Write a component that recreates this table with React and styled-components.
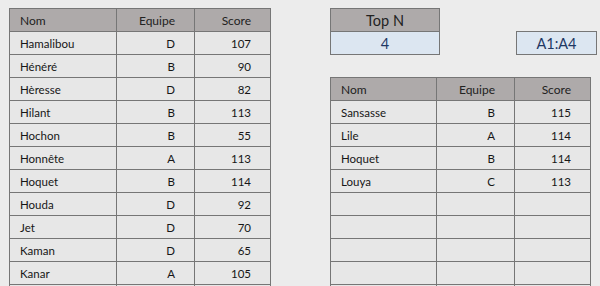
import React from "react";
import styled, { createGlobalStyle } from "styled-components";

const Global = createGlobalStyle`
  html, body {
    margin: 0;
    padding: 0;
    width: 600px;
    height: 286px;
    overflow: hidden;
    background: #ececec;
    font-family: Lato, "Liberation Sans", sans-serif;
  }
`;

const Page = styled.div`
  display: flex;
  align-items: flex-start;
  padding: 8px 0 0 9px;
`;

const Grid = styled.div`
  display: grid;
  grid-template-columns: ${(p) => p.$cols};
  grid-auto-rows: 22px;
  gap: 1px;
  background: #767676;
  border: 1px solid #767676;
  width: max-content;
`;

const Cell = styled.div`
  display: flex;
  align-items: center;
  justify-content: ${(p) => (p.$align === "left" ? "flex-start" : "flex-end")};
  padding: ${(p) => (p.$align === "left" ? "0 0 0 10px" : "0 19px 0 0")};
  background: ${(p) => (p.$head ? "#aeaaaa" : "#e7e7e7")};
  color: ${(p) => (p.$head ? "#222" : "#161616")};
  font-size: ${(p) => (p.$head ? "12px" : "11.5px")};
  white-space: nowrap;
`;

const RightCol = styled.div`
  display: flex;
  flex-direction: column;
  margin-left: 59px;
`;

const TopRow = styled.div`
  display: flex;
  align-items: flex-end;
  gap: 76px;
`;

const Box = styled.div`
  display: grid;
  grid-auto-rows: 22px;
  gap: 1px;
  background: #767676;
  border: 1px solid #767676;
  width: ${(p) => p.$w}px;
`;

const BoxCell = styled.div`
  display: flex;
  align-items: center;
  justify-content: center;
  font-size: 14.5px;
  background: ${(p) => (p.$head ? "#aeaaaa" : "#dce6f1")};
  color: ${(p) => (p.$head ? "#222" : "#1f3864")};
`;

const ResultWrap = styled.div`
  margin-top: 22px;
`;

const source = [
  ["Hamalibou", "D", "107"],
  ["Hénéré", "B", "90"],
  ["Hèresse", "D", "82"],
  ["Hilant", "B", "113"],
  ["Hochon", "B", "55"],
  ["Honnête", "A", "113"],
  ["Hoquet", "B", "114"],
  ["Houda", "D", "92"],
  ["Jet", "D", "70"],
  ["Kaman", "D", "65"],
  ["Kanar", "A", "105"],
  ["", "", ""],
];

const result = [
  ["Sansasse", "B", "115"],
  ["Lile", "A", "114"],
  ["Hoquet", "B", "114"],
  ["Louya", "C", "113"],
  ["", "", ""],
  ["", "", ""],
  ["", "", ""],
  ["", "", ""],
  ["", "", ""],
];

function DataTable({ rows, cols }) {
  return (
    <Grid $cols={cols}>
      <Cell $head $align="left">Nom</Cell>
      <Cell $head>Equipe</Cell>
      <Cell $head>Score</Cell>
      {rows.map((r, i) => (
        <React.Fragment key={i}>
          <Cell $align="left">{r[0]}</Cell>
          <Cell>{r[1]}</Cell>
          <Cell>{r[2]}</Cell>
        </React.Fragment>
      ))}
    </Grid>
  );
}

export default function App() {
  return (
    <>
      <Global />
      <Page>
        <DataTable rows={source} cols="106px 77px 75px" />
        <RightCol>
          <TopRow>
            <Box $w={108}>
              <BoxCell $head>Top N</BoxCell>
              <BoxCell>4</BoxCell>
            </Box>
            <Box $w={79}>
              <BoxCell>A1:A4</BoxCell>
            </Box>
          </TopRow>
          <ResultWrap>
            <DataTable rows={result} cols="105px 77px 75px" />
          </ResultWrap>
        </RightCol>
      </Page>
    </>
  );
}
